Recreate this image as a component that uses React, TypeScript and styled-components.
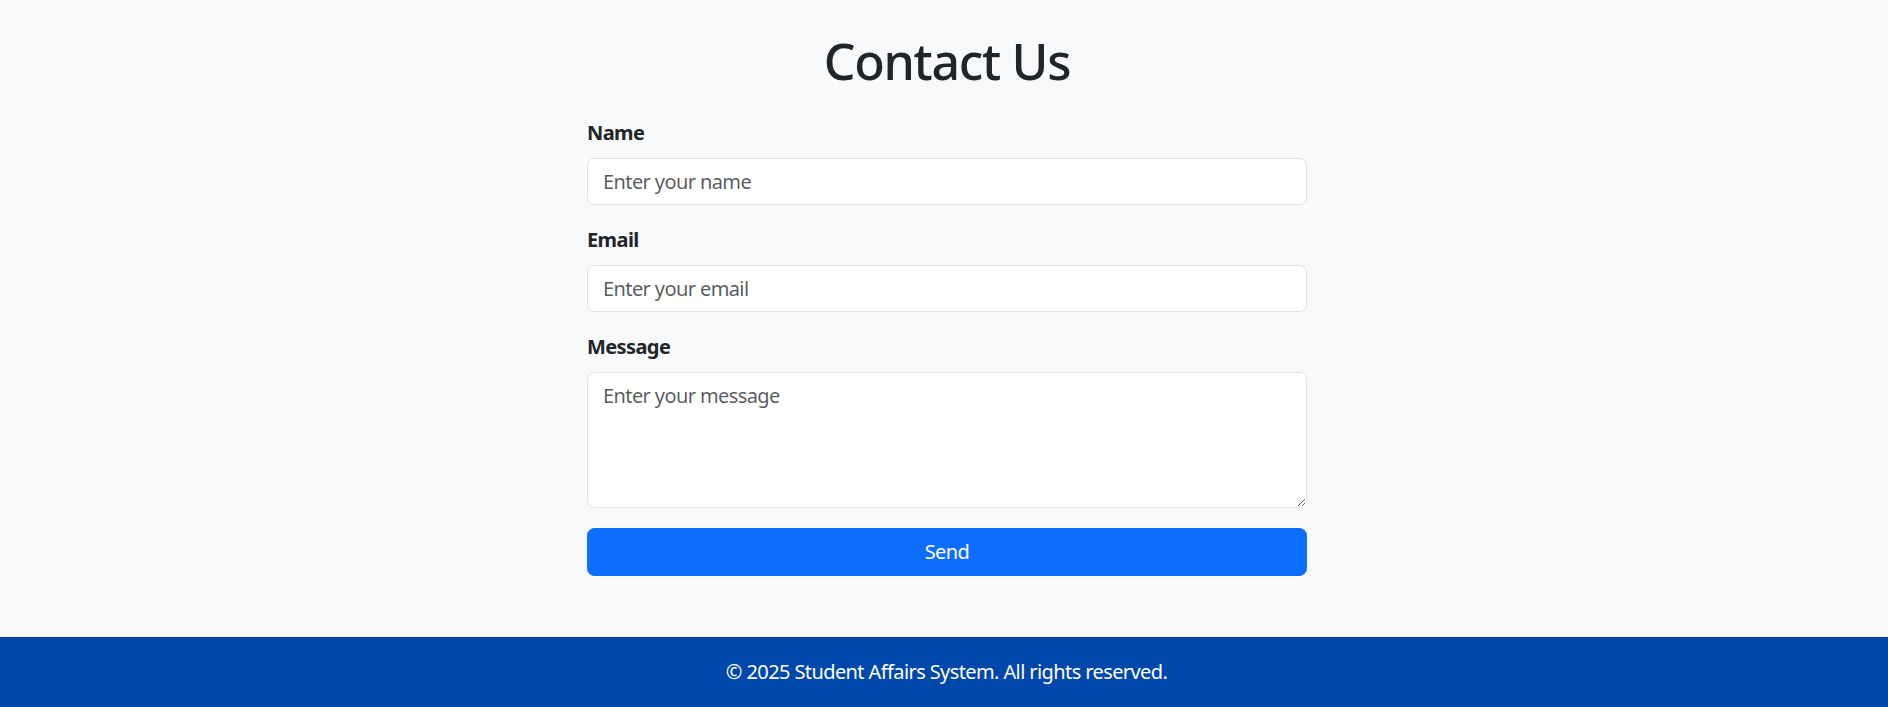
import React from "react";
import styled, { createGlobalStyle } from "styled-components";

const FONT = `"Segoe UI", "Noto Sans", "Liberation Sans", sans-serif`;

const GlobalStyle = createGlobalStyle`
  html, body {
    margin: 0;
    padding: 0;
    background: #f8f9fa;
  }
  body {
    font-family: ${FONT};
    color: #212529;
    font-size: 20px;
    line-height: 1.5;
    letter-spacing: -0.03em;
  }
  * { box-sizing: border-box; }
`;

const Page = styled.div`
  display: flex;
  flex-direction: column;
  min-height: 707px;
`;

const Main = styled.main`
  width: 720px;
  margin-left: calc(50% - 357px);
  padding-top: 31px;
  flex: 1;
`;

const Title = styled.h1`
  margin: 0 0 27px;
  font-size: 50px;
  line-height: 60px;
  font-weight: 500;
  letter-spacing: -0.026em;
  text-align: center;
  color: #212529;
`;

const Form = styled.form`
  display: flex;
  flex-direction: column;
`;

const Field = styled.div`
  display: flex;
  flex-direction: column;
  margin-bottom: 20px;
`;

const Label = styled.label`
  font-weight: 700;
  font-size: 20px;
  line-height: 30px;
  margin-bottom: 10px;
  color: #212529;
`;

const controlBase = `
  width: 100%;
  font-family: ${FONT};
  font-size: 20px;
  line-height: 30px;
  letter-spacing: -0.03em;
  color: #212529;
  background: #ffffff;
  border: 1px solid #dee2e6;
  border-radius: 7.5px;
  padding: 7.5px 15px;
  outline: none;
  &::placeholder {
    color: rgba(33, 37, 41, 0.75);
  }
`;

const Input = styled.input`
  ${controlBase}
  height: 47px;
`;

const TextArea = styled.textarea`
  ${controlBase}
  height: 136px;
  resize: vertical;
  display: block;
`;

const SendButton = styled.button`
  width: 100%;
  height: 48px;
  border: 1px solid #0d6efd;
  border-radius: 7.5px;
  background: #0d6efd;
  color: #ffffff;
  font-family: ${FONT};
  font-size: 20px;
  line-height: 30px;
  letter-spacing: -0.03em;
  cursor: pointer;
`;

const Footer = styled.footer`
  margin-top: 61px;
  background: #0047ab;
  color: #ffffff;
  text-align: center;
  padding: 20px 20px 20px 25px;
  font-size: 20px;
  line-height: 30px;
`;

export default function App() {
  return (
    <>
      <GlobalStyle />
      <Page>
        <Main>
          <Title>Contact Us</Title>
          <Form onSubmit={(e) => e.preventDefault()}>
            <Field>
              <Label htmlFor="name">Name</Label>
              <Input id="name" type="text" placeholder="Enter your name" />
            </Field>
            <Field>
              <Label htmlFor="email">Email</Label>
              <Input id="email" type="email" placeholder="Enter your email" />
            </Field>
            <Field>
              <Label htmlFor="message">Message</Label>
              <TextArea id="message" placeholder="Enter your message" />
            </Field>
            <SendButton type="submit">Send</SendButton>
          </Form>
        </Main>
        <Footer>© 2025 Student Affairs System. All rights reserved.</Footer>
      </Page>
    </>
  );
}
